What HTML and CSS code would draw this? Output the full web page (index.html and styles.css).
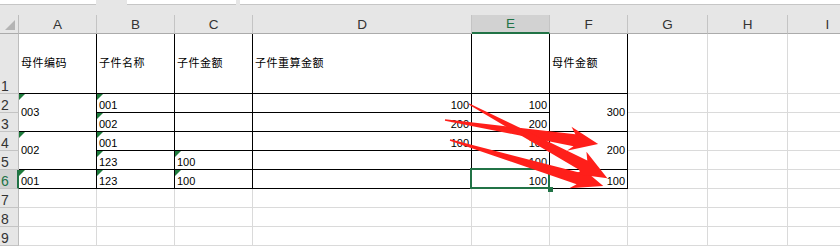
FILE: index.html
```html
<!DOCTYPE html>
<html>
<head>
<meta charset="utf-8">
<link rel="stylesheet" href="styles.css">
</head>
<body>

<div class="topbar">
    <div class="box namebox"></div>
    <div class="box fxbox"></div>
    <div class="box formula"></div>
</div>

<div class="sheet">
    <!-- column headers -->
    <div class="corner"></div>
    <div class="col">A</div>
    <div class="col">B</div>
    <div class="col">C</div>
    <div class="col">D</div>
    <div class="col on">E</div>
    <div class="col">F</div>
    <div class="col">G</div>
    <div class="col">H</div>
    <div class="col">I</div>

    <!-- row 1: titles -->
    <div class="row">1</div>
    <div class="c b mid zh">母件编码</div>
    <div class="c b mid zh">子件名称</div>
    <div class="c b mid zh">子件金额</div>
    <div class="c b mid zh">子件重算金额</div>
    <div class="c b"></div>
    <div class="c b mid zh">母件金额</div>
    <div class="c"></div>
    <div class="c"></div>
    <div class="c"></div>

    <!-- row 2 -->
    <div class="row">2</div>
    <div class="c b mid tag span">003</div>
    <div class="c b tag">001</div>
    <div class="c b"></div>
    <div class="c b r">100</div>
    <div class="c b r">100</div>
    <div class="c b r mid span">300</div>
    <div class="c"></div>
    <div class="c"></div>
    <div class="c"></div>

    <!-- row 3 -->
    <div class="row">3</div>
    <div class="c b tag">002</div>
    <div class="c b"></div>
    <div class="c b r">200</div>
    <div class="c b r">200</div>
    <div class="c"></div>
    <div class="c"></div>
    <div class="c"></div>

    <!-- row 4 -->
    <div class="row">4</div>
    <div class="c b mid tag span">002</div>
    <div class="c b tag">001</div>
    <div class="c b"></div>
    <div class="c b r">100</div>
    <div class="c b r">100</div>
    <div class="c b r mid span">200</div>
    <div class="c"></div>
    <div class="c"></div>
    <div class="c"></div>

    <!-- row 5 -->
    <div class="row">5</div>
    <div class="c b tag">123</div>
    <div class="c b tag">100</div>
    <div class="c b"></div>
    <div class="c b r">100</div>
    <div class="c"></div>
    <div class="c"></div>
    <div class="c"></div>

    <!-- row 6 -->
    <div class="row on">6</div>
    <div class="c b tag">001</div>
    <div class="c b tag">123</div>
    <div class="c b tag">100</div>
    <div class="c b"></div>
    <div class="c b r sel">100</div>
    <div class="c b r">100</div>
    <div class="c"></div>
    <div class="c"></div>
    <div class="c"></div>

    <!-- empty rows -->
    <div class="row">7</div>
    <div class="c"></div><div class="c"></div><div class="c"></div>
    <div class="c"></div><div class="c"></div><div class="c"></div>
    <div class="c"></div><div class="c"></div><div class="c"></div>

    <div class="row">8</div>
    <div class="c"></div><div class="c"></div><div class="c"></div>
    <div class="c"></div><div class="c"></div><div class="c"></div>
    <div class="c"></div><div class="c"></div><div class="c"></div>

    <div class="row">9</div>
    <div class="c"></div><div class="c"></div><div class="c"></div>
    <div class="c"></div><div class="c"></div><div class="c"></div>
    <div class="c"></div><div class="c"></div><div class="c"></div>
</div>

<!-- hand drawn arrows on top of the sheet -->
<svg class="marks" width="840" height="246" viewBox="0 0 840 246">
    <g fill="#ff1f1a">
        <polygon transform="translate(445 120) rotate(8.9)" points="0,-0.7 131,-6 126,-13 155,0 125,11.5 131,6 0,0.7"/>
        <polygon transform="translate(450 140) rotate(16.7)" points="0,-0.7 134,-6 129,-13.5 160,0 128,12 134,6 0,0.7"/>
        <polygon transform="translate(469 104) rotate(28.2)" points="0,-0.7 131,-6 126,-13.5 157,0 125,12 131,6 0,0.7"/>
    </g>
</svg>

</body>
</html>
```

FILE: styles.css
```css
body {
    margin: 0;
    overflow: hidden;
    background: #fff;
    font-family: "Liberation Sans", "Noto Sans CJK SC", sans-serif;
    position: relative;
}

/* formula bar strip */
.topbar {
    display: flex;
    align-items: flex-start;
    height: 15px;
    background: #e6e6e6;
}
.box {
    height: 4px;
    background: #fff;
    border-bottom: 1px solid #c6c6c6;
}
.namebox {
    width: 96px;
}
.fxbox {
    width: 109px;
    margin-left: 31px;
}
.formula {
    flex: 1;
    margin-left: 4px;
}

/* grid of cells */
.sheet {
    display: grid;
    grid-template-columns: 19px 78px 78px 78px 219px 78px 78px 80px 80px 80px;
    grid-template-rows: 19px 60px repeat(8, 19px);
}
.sheet > div {
    box-sizing: border-box;
    border-right: 1px solid #dadada;
    border-bottom: 1px solid #dadada;
}

.corner {
    position: relative;
    background: #e6e6e6;
    border-right-color: #bdbdbd !important;
    border-bottom-color: #ababab !important;
}
.corner::after {
    content: '';
    position: absolute;
    right: 3px;
    bottom: 3px;
    border-left: 10px solid transparent;
    border-bottom: 10px solid #b4b4b4;
}

.col {
    display: flex;
    align-items: center;
    justify-content: center;
    background: #e6e6e6;
    border-right-color: #c4c4c4 !important;
    border-bottom-color: #ababab !important;
    font-size: 13.5px;
    color: #333;
}
.col.on {
    background: #d2d2d2;
    color: #217346;
    border-bottom: 2px solid #217346 !important;
}

.row {
    display: flex;
    align-items: flex-end;
    padding-left: 1px;
    background: #e6e6e6;
    border-right-color: #bdbdbd !important;
    border-bottom-color: #c4c4c4 !important;
    font-size: 14px;
    line-height: 14px;
    color: #333;
}
.row.on {
    background: #d2d2d2;
    color: #217346;
    border-right: 2px solid #217346 !important;
}

.c {
    position: relative;
    display: flex;
    align-items: flex-end;
    padding: 0 2px;
    font-size: 11px;
    line-height: 13px;
    color: #000;
}
.c.b {
    border-color: #000;
}
.c.mid {
    align-items: center;
}
.c.r {
    justify-content: flex-end;
}
.c.span {
    grid-row: span 2;
}
.zh {
    letter-spacing: .5px;
}

/* number stored as text marker */
.c.tag::before {
    content: '';
    position: absolute;
    left: 0;
    top: 0;
    border-top: 6px solid #1e7b3c;
    border-right: 6px solid transparent;
}

/* active cell */
.c.sel::after {
    content: '';
    position: absolute;
    left: -2px;
    top: -2px;
    right: -1px;
    bottom: -1px;
    border: 2px solid #217346;
}
.c.sel::before {
    content: '';
    position: absolute;
    right: -4px;
    bottom: -4px;
    width: 5px;
    height: 5px;
    background: #217346;
    z-index: 1;
}

.marks {
    position: absolute;
    left: 0;
    top: 0;
    pointer-events: none;
}
```
